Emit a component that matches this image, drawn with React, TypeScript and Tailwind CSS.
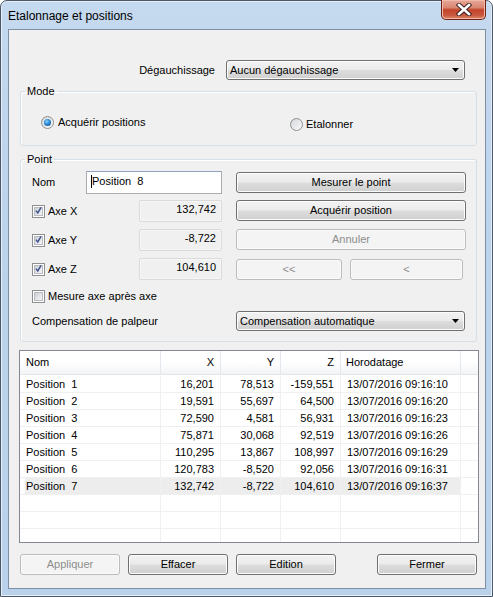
import React from "react"

const rows = [
    ["Position  1", "16,201", "78,513", "-159,551", "13/07/2016 09:16:10"],
    ["Position  2", "19,591", "55,697", "64,500", "13/07/2016 09:16:20"],
    ["Position  3", "72,590", "4,581", "56,931", "13/07/2016 09:16:23"],
    ["Position  4", "75,871", "30,068", "92,519", "13/07/2016 09:16:26"],
    ["Position  5", "110,295", "13,867", "108,997", "13/07/2016 09:16:29"],
    ["Position  6", "120,783", "-8,520", "92,056", "13/07/2016 09:16:31"],
    ["Position  7", "132,742", "-8,722", "104,610", "13/07/2016 09:16:37"],
]

function Btn({ children, className, disabled }: { children: React.ReactNode; className: string; disabled?: boolean }) {
    return (
        <div
            className={
                "h-[21px] flex items-center justify-center rounded-[3px] border " +
                (disabled
                    ? "border-[#bcbcbc] bg-[#f4f4f4] text-[#8d8d8d] shadow-[inset_0_0_0_1px_#fbfbfb] "
                    : "border-[#707070] bg-[linear-gradient(#f2f2f2_0%,#ebebeb_48%,#dddddd_52%,#cfcfcf_100%)] shadow-[inset_0_0_0_1px_#fcfcfc] text-black ") +
                className
            }
        >
            {children}
        </div>
    )
}

function Combo({ value, className }: { value: string; className: string }) {
    return (
        <div className={"h-[20px] flex items-center rounded-[3px] border border-[#707070] bg-[linear-gradient(#f2f2f2_0%,#ebebeb_48%,#dddddd_52%,#cfcfcf_100%)] shadow-[inset_0_0_0_1px_#fcfcfc] pl-[3px] pr-[5px] " + className}>
            <span className="flex-1">{value}</span>
            <svg width="7" height="4" viewBox="0 0 7 4"><path d="M0 0h7L3.5 4z" fill="#000" /></svg>
        </div>
    )
}

function Check({ checked }: { checked?: boolean }) {
    return (
        <div className="w-[13px] h-[13px] border border-[#8e8f8f] bg-white p-[1px] shrink-0">
            <div className="w-full h-full bg-[linear-gradient(135deg,#cbcfd5,#f6f6f6)] border border-[#b8bcc2] flex items-center justify-center">
                {checked && (
                    <svg width="9" height="9" viewBox="0 0 9 9" className="-mt-[1px]">
                        <path d="M1.2 4.6L3.6 7.6L7.8 0.6" stroke="#3d5190" strokeWidth="1.8" fill="none" />
                    </svg>
                )}
            </div>
        </div>
    )
}

function Radio({ checked }: { checked?: boolean }) {
    return (
        <div className="w-[13px] h-[13px] rounded-full border border-[#8e8f8f] bg-[linear-gradient(135deg,#d3d6da,#fbfbfb)] flex items-center justify-center shrink-0">
            {checked && <div className="w-[7px] h-[7px] rounded-full bg-[radial-gradient(circle_at_40%_35%,#8ad3ff_0%,#2a8ad4_45%,#0d3a7a_100%)]" />}
        </div>
    )
}

function ReadField({ value }: { value: string }) {
    return (
        <div className="w-[83px] h-[22px] border border-[#dadada] rounded-[2px] bg-[#f0f0f0] shadow-[inset_0_0_0_1px_#f7f7f7] flex items-center justify-end pr-[5px] pb-[3px]">
            {value}
        </div>
    )
}

function AxeRow({ label, value, children }: { label: string; value: string; children: React.ReactNode }) {
    return (
        <div className="h-[29px] flex items-start">
            <div className="w-[107px] h-[22px] flex items-center gap-[3px]">
                <Check checked />
                <span>{label}</span>
            </div>
            <ReadField value={value} />
            <div className="ml-[14px] flex gap-[8px]">{children}</div>
        </div>
    )
}

export default function App() {
    return (
        <div className="w-[493px] h-[597px] font-['Liberation_Sans',Arial,sans-serif] text-[11px] text-black bg-white">
            <div className="w-full h-full flex flex-col rounded-t-[7px] border border-[#4b5867] bg-[linear-gradient(180deg,#c5d9ef_0%,#bcd3ec_40%,#b9d1ea_100%)] shadow-[inset_0_0_0_1px_#e6eef8] pl-[7px] pr-[6px] pb-[7px]">
                <div className="h-[28px] flex items-start relative">
                    <span className="text-[12px] mt-[6px] text-black">Etalonnage et positions</span>
                    <div className="absolute right-0 -top-[1px] w-[45px] h-[20px] rounded-b-[5px] border border-[#6e2316] border-t-0 bg-[linear-gradient(180deg,#e9a797_0%,#d98672_40%,#c4432a_52%,#c8583e_80%,#e08a6f_100%)] shadow-[inset_0_0_0_1px_#f0b9a9] flex items-center justify-center">
                        <svg width="16" height="13" viewBox="0 0 16 13">
                            <path d="M3 2L8 6.5M13 2L8 6.5M3 11L8 6.5M13 11L8 6.5" stroke="#3a2220" strokeWidth="4.5" strokeLinecap="square" />
                            <path d="M3 2L8 6.5M13 2L8 6.5M3 11L8 6.5M13 11L8 6.5" stroke="#ffffff" strokeWidth="2.6" strokeLinecap="square" />
                        </svg>
                    </div>
                </div>
                <div className="flex-1 border border-[#7f8fa3] bg-[#f0f0f0] pl-[11px] pr-[7px] pt-[30px] flex flex-col">
                    <div className="h-[20px] flex items-center">
                        <span className="w-[195px] text-right">Dégauchissage</span>
                        <Combo value="Aucun dégauchissage" className="ml-[11px] w-[239px]" />
                    </div>

                    <fieldset className="mt-[4px] w-[457px] h-[62px] border border-[#d5dfe5] rounded-[3px] shadow-[inset_1px_1px_0_#ffffff] px-0 pb-0">
                        <legend className="ml-[4px] px-[2px] leading-[14px]">Mode</legend>
                        <div className="flex items-start pl-[20px] pt-[16px]">
                            <div className="w-[249px] flex items-center gap-[4px]">
                                <Radio checked />
                                <span>Acquérir positions</span>
                            </div>
                            <div className="mt-[2px] flex items-center gap-[3px]">
                                <Radio />
                                <span>Etalonner</span>
                            </div>
                        </div>
                    </fieldset>

                    <fieldset className="mt-[6px] w-[457px] h-[190px] border border-[#d5dfe5] rounded-[3px] shadow-[inset_1px_1px_0_#ffffff] px-0 pb-0">
                        <legend className="ml-[4px] px-[2px] leading-[14px]">Point</legend>
                        <div className="pl-[11px] pt-[5px] flex flex-col">
                            <div className="h-[29px] flex items-start">
                                <span className="w-[54px] h-[23px] flex items-center">Nom</span>
                                <div className="w-[136px] h-[23px] border border-[#abadb3] border-t-[#8ea3bd] bg-white flex items-center pl-[4px] pb-[3px]">
                                    <span className="w-px h-[13px] bg-black" />
                                    <span className="whitespace-pre">Position  8</span>
                                </div>
                                <Btn className="ml-[14px] mt-[1px] w-[230px]">Mesurer le point</Btn>
                            </div>
                            <AxeRow label="Axe X" value="132,742">
                                <Btn className="w-[230px]">Acquérir position</Btn>
                            </AxeRow>
                            <AxeRow label="Axe Y" value="-8,722">
                                <Btn disabled className="w-[230px]">Annuler</Btn>
                            </AxeRow>
                            <AxeRow label="Axe Z" value="104,610">
                                <Btn disabled className="mt-[1px] w-[106px]">&lt;&lt;</Btn>
                                <Btn disabled className="mt-[1px] w-[113px]">&lt;</Btn>
                            </AxeRow>
                            <div className="h-[16px] mt-[1px] flex items-center gap-[3px]">
                                <Check />
                                <span>Mesure axe après axe</span>
                            </div>
                            <div className="mt-[7px] h-[20px] flex items-center">
                                <span className="w-[204px]">Compensation de palpeur</span>
                                <Combo value="Compensation automatique" className="w-[229px]" />
                            </div>
                        </div>
                    </fieldset>

                    <div className="mt-[8px] -ml-[1px] w-[460px] h-[193px] border border-[#828790] bg-white flex flex-col overflow-hidden">
                        <div className="h-[24px] flex bg-[linear-gradient(#ffffff_0%,#ffffff_45%,#f3f4f6_100%)] border-b border-[#e5e5e5] shrink-0">
                            <div className="w-[141px] pl-[6px] flex items-center border-r border-[#e3e8ee]">Nom</div>
                            <div className="w-[60px] pr-[6px] flex items-center justify-end border-r border-[#e3e8ee]">X</div>
                            <div className="w-[60px] pr-[6px] flex items-center justify-end border-r border-[#e3e8ee]">Y</div>
                            <div className="w-[60px] pr-[6px] flex items-center justify-end border-r border-[#e3e8ee]">Z</div>
                            <div className="w-[120px] pl-[5px] flex items-center border-r border-[#e3e8ee]">Horodatage</div>
                            <div className="flex-1" />
                        </div>
                        <div className="flex flex-col pt-[1px]">
                            {rows.map((r, i) => {
                                const sel = i === 6
                                return (
                                    <div key={i} className="h-[17px] flex border-b border-[#f0f0f0]">
                                        <div className={"flex items-center border-r border-[#f0f0f0] whitespace-pre " + (sel ? "w-[136px] ml-[5px] pl-[1px] bg-[#ededed]" : "w-[141px] pl-[6px]")}>
                                            {r[0]}
                                        </div>
                                        <div className={"w-[60px] pr-[6px] flex items-center justify-end border-r border-[#f0f0f0] " + (sel ? "bg-[#ededed]" : "")}>{r[1]}</div>
                                        <div className={"w-[60px] pr-[6px] flex items-center justify-end border-r border-[#f0f0f0] " + (sel ? "bg-[#ededed]" : "")}>{r[2]}</div>
                                        <div className={"w-[60px] pr-[6px] flex items-center justify-end border-r border-[#f0f0f0] " + (sel ? "bg-[#ededed]" : "")}>{r[3]}</div>
                                        <div className={"w-[120px] pl-[6px] flex items-center border-r border-[#f0f0f0] " + (sel ? "bg-[#ededed]" : "")}>{r[4]}</div>
                                        <div className="flex-1" />
                                    </div>
                                )
                            })}
                            {[0, 1, 2].map((i) => (
                                <div key={"e" + i} className="h-[17px] flex border-b border-[#f0f0f0]">
                                    <div className="w-[141px] border-r border-[#f0f0f0]" />
                                    <div className="w-[60px] border-r border-[#f0f0f0]" />
                                    <div className="w-[60px] border-r border-[#f0f0f0]" />
                                    <div className="w-[60px] border-r border-[#f0f0f0]" />
                                    <div className="w-[120px] border-r border-[#f0f0f0]" />
                                    <div className="flex-1" />
                                </div>
                            ))}
                        </div>
                    </div>

                    <div className="mt-[11px] flex">
                        <Btn disabled className="w-[100px]">Appliquer</Btn>
                        <Btn className="ml-[8px] w-[100px]">Effacer</Btn>
                        <Btn className="ml-[8px] w-[100px]">Edition</Btn>
                        <Btn className="ml-[41px] w-[100px]">Fermer</Btn>
                    </div>
                </div>
            </div>
        </div>
    )
}
